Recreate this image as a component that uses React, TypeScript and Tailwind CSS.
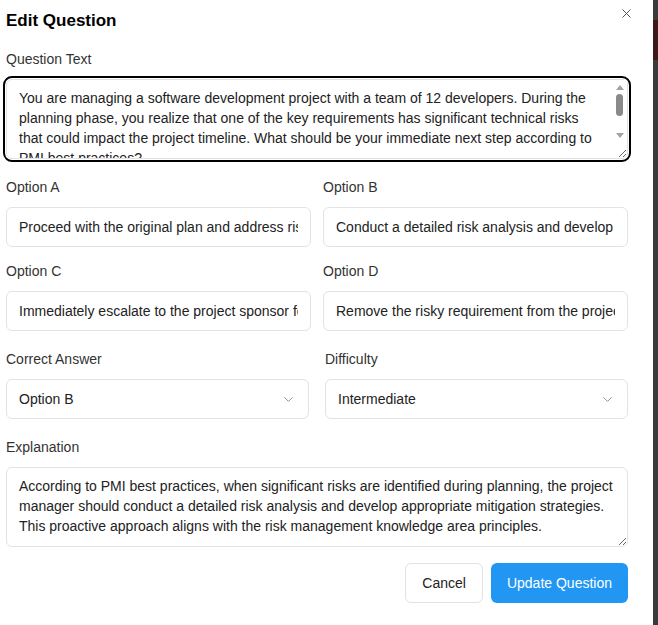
import { X, ChevronDown } from "lucide-react";

const questionText =
  "You are managing a software development project with a team of 12 developers. During the planning phase, you realize that one of the key requirements has significant technical risks that could impact the project timeline. What should be your immediate next step according to PMI best practices?";

const explanationText =
  "According to PMI best practices, when significant risks are identified during planning, the project manager should conduct a detailed risk analysis and develop appropriate mitigation strategies. This proactive approach aligns with the risk management knowledge area principles.";

const options = [
  { label: "Option A", value: "Proceed with the original plan and address risks as they arise" },
  { label: "Option B", value: "Conduct a detailed risk analysis and develop mitigation strategies" },
  { label: "Option C", value: "Immediately escalate to the project sponsor for a decision" },
  { label: "Option D", value: "Remove the risky requirement from the project scope" },
];

function Label({ children }: { children: React.ReactNode }) {
  return <label className="block text-sm leading-5 text-[#333] mb-2.5">{children}</label>;
}

function FakeSelect({ value }: { value: string }) {
  return (
    <div className="flex h-10 items-center justify-between rounded-md border border-[#e3e3e3] bg-white pl-3 pr-3 text-sm text-[#222]">
      <span>{value}</span>
      <ChevronDown size={15} strokeWidth={1.5} className="text-[#888]" />
    </div>
  );
}

export default function App() {
  return (
    <div className="flex h-[625px] w-full overflow-hidden bg-[#3a3a3a] font-['Liberation_Sans',Arial,sans-serif]">
      {/* Modal panel */}
      <div className="w-[653px] shrink-0 bg-white pl-[6px] pr-[25px] pt-[7px]">
        <div className="flex items-start justify-between">
          <h2 className="text-[17px] font-bold leading-7 text-black">Edit Question</h2>
          <button className="-mr-[6px] mt-[-1px] text-[#555]">
            <X size={15} strokeWidth={1.6} />
          </button>
        </div>

        <div className="mt-[14px]">
          <Label>Question Text</Label>
          <div className="relative">
            <textarea
              defaultValue={questionText}
              className="block h-20 w-full overflow-hidden rounded-md border border-[#e3e3e3] py-2 pl-3 pr-[27px] text-sm leading-5 text-[#222] outline-2 outline-offset-1 outline-black"
            />
            {/* classic scrollbar over the textarea */}
            <div className="pointer-events-none absolute right-[1px] top-[1px] flex h-[62px] w-[15px] flex-col items-center bg-white pt-[5px]">
              <div className="h-0 w-0 border-x-[4px] border-b-[5px] border-x-transparent border-b-[#a3a3a3]" />
              <div className="mt-[4px] h-[22px] w-[7px] rounded-full bg-[#8a8a8a]" />
              <div className="mt-auto mb-[4px] h-0 w-0 border-x-[4px] border-t-[5px] border-x-transparent border-t-[#a3a3a3]" />
            </div>
          </div>
        </div>

        <div className="mt-[18px] grid grid-cols-2 gap-x-3 gap-y-[14px]">
          {options.map((o) => (
            <div key={o.label}>
              <Label>{o.label}</Label>
              <input
                defaultValue={o.value}
                className="block h-10 w-full rounded-md border border-[#e3e3e3] px-3 text-sm text-[#222] outline-none"
              />
            </div>
          ))}
        </div>

        <div className="mt-[18px] grid grid-cols-2 gap-x-4">
          <div>
            <Label>Correct Answer</Label>
            <FakeSelect value="Option B" />
          </div>
          <div>
            <Label>Difficulty</Label>
            <FakeSelect value="Intermediate" />
          </div>
        </div>

        <div className="mt-[18px]">
          <Label>Explanation</Label>
          <textarea
            defaultValue={explanationText}
            className="block h-20 w-full rounded-md border border-[#e3e3e3] px-3 py-2 text-sm leading-5 text-[#222] outline-none"
          />
        </div>

        <div className="mt-4 flex justify-end gap-2">
          <button className="h-10 rounded-md border border-[#e3e3e3] bg-white px-4 text-sm text-[#222]">
            Cancel
          </button>
          <button className="h-10 rounded-md bg-[#2196f3] px-4 text-sm text-white">
            Update Question
          </button>
        </div>
      </div>

      {/* Backdrop sliver */}
      <div className="flex-1">
        <div className="mt-5 h-10 bg-[#3b1a1a]" />
      </div>
    </div>
  );
}
